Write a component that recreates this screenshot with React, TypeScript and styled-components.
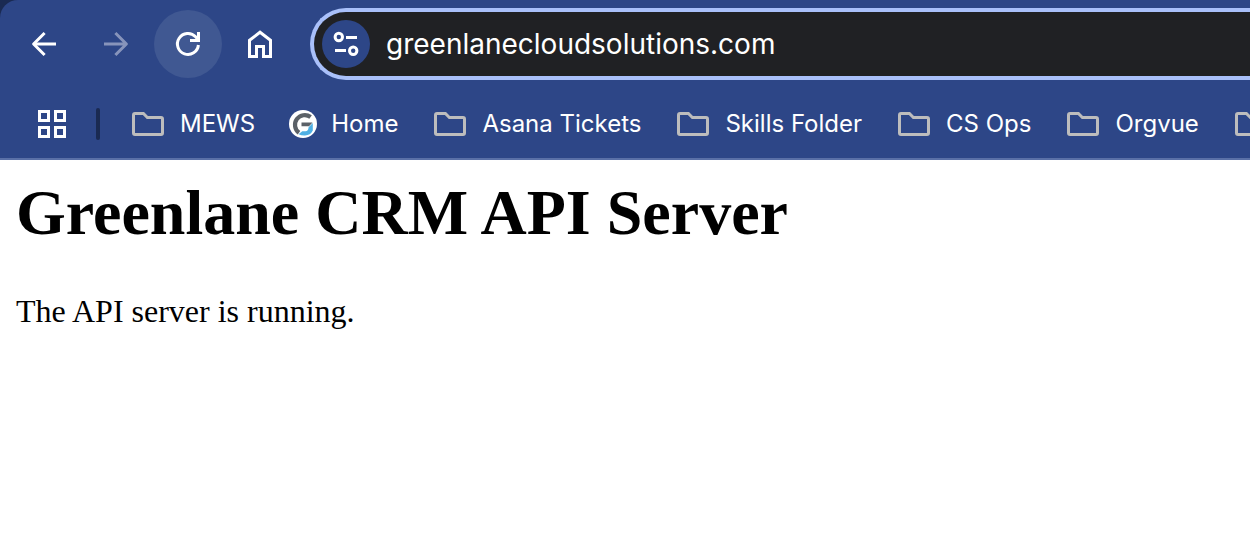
import React, { useState } from "react";
import styled, { createGlobalStyle } from "styled-components";

const GlobalStyle = createGlobalStyle`
  *, *::before, *::after { box-sizing: border-box; }
  body {
    margin: 0;
    background: #ffffff;
    overflow-x: hidden;
  }
`;

const Frame = styled.div`
  background: #1a2a52;
`;

const Chrome = styled.header`
  background: #2d4687;
  border-bottom: 2px solid #5a70a7;
  border-top-left-radius: 18px;
  font-family: Inter, "Liberation Sans", sans-serif;
  color: #ffffff;
  overflow: hidden;
`;

const Toolbar = styled.div`
  display: flex;
  align-items: center;
  gap: 4px;
  padding: 8px 0 8px 10px;
`;

const NavButton = styled.button<{ $active?: boolean }>`
  display: flex;
  align-items: center;
  justify-content: center;
  flex: none;
  width: 68px;
  height: 68px;
  padding: 0;
  border: 0;
  border-radius: 50%;
  background: ${(p) => (p.$active ? "#405892" : "transparent")};
  color: #ffffff;

  &:disabled {
    color: #8794bb;
  }
`;

const AddressBar = styled.form`
  display: flex;
  align-items: center;
  flex: 1;
  gap: 16px;
  height: 72px;
  margin-left: 12px;
  padding-left: 8px;
  border: 4px solid #a9c0fa;
  border-right: 0;
  border-radius: 36px 0 0 36px;
  background: #202124;
`;

const SiteInfo = styled.button`
  display: flex;
  flex: none;
  width: 48px;
  height: 48px;
  padding: 0;
  border: 0;
  border-radius: 50%;
  background: #2d4687;
  color: #ffffff;
`;

const AddressInput = styled.input`
  flex: 1;
  min-width: 0;
  padding: 0;
  border: 0;
  outline: 0;
  background: transparent;
  color: #ffffff;
  font: 400 28px/36px Inter, "Liberation Sans", sans-serif;
`;

const Bookmarks = styled.nav`
  display: flex;
  align-items: center;
  height: 70px;
  padding: 2px 0 0 38px;
`;

const AppsButton = styled.button`
  display: flex;
  flex: none;
  padding: 0;
  border: 0;
  background: transparent;
  color: #ffffff;
`;

const Divider = styled.span`
  flex: none;
  width: 4px;
  height: 32px;
  margin: 0 32px 0 30px;
  border-radius: 2px;
  background: #1a2a52;
`;

const BookmarkList = styled.ul`
  display: flex;
  gap: 36px;
  margin: 0;
  padding: 0;
  list-style: none;
`;

const Bookmark = styled.a`
  display: flex;
  align-items: center;
  gap: 16px;
  color: #ffffff;
  font-size: 24px;
  line-height: 32px;
  text-decoration: none;
  white-space: nowrap;

  svg { flex: none; }
`;

const Favicon = styled.svg`
  margin: 0 -2px;
`;

const Page = styled.main`
  padding: 16px;
  font-family: "Liberation Serif", "Times New Roman", serif;
  color: #000000;
`;

const Title = styled.h1`
  margin: 0 0 43px;
  font-size: 64px;
  line-height: 74px;
  font-weight: 700;
`;

const Status = styled.p`
  margin: 0;
  font-size: 32px;
  line-height: 36px;
`;

const stroke = { fill: "none", stroke: "currentColor", strokeWidth: 3 };

const BackIcon = () => (
  <svg width="32" height="32" viewBox="0 0 32 32" {...stroke}>
    <path d="M28 16H6" />
    <path d="M16.6 5L5.6 16L16.6 27" strokeLinejoin="round" />
  </svg>
);

const ForwardIcon = () => (
  <svg width="32" height="32" viewBox="0 0 32 32" {...stroke}>
    <path d="M4 16H26M15.4 5L26.4 16L15.4 27" strokeLinejoin="round" />
  </svg>
);

const ReloadIcon = () => (
  <svg width="32" height="32" viewBox="0 0 32 32" {...stroke}>
    <path d="M26.4 17A10.5 10.5 0 1 1 23.6 8.8L26.4 12" />
    <path d="M26.5 4V12.5H18" />
  </svg>
);

const HomeIcon = () => (
  <svg width="32" height="32" viewBox="0 0 32 32" {...stroke}>
    <path d="M5.5 28.5V12.3L16 4.2L26.5 12.3V28.5H19.5V18.5H12.5V28.5Z" />
  </svg>
);

const TuneIcon = () => (
  <svg width="48" height="48" viewBox="0 0 48 48" {...stroke}>
    <circle cx="16.8" cy="17" r="3.7" />
    <path d="M24 17.5H35M13 30.5H24" />
    <circle cx="31.2" cy="30.8" r="3.7" />
  </svg>
);

const AppsIcon = () => (
  <svg width="28" height="28" viewBox="0 0 28 28" {...stroke}>
    <path d="M1.5 1.5H10.5V10.5H1.5ZM17.5 1.5H26.5V10.5H17.5ZM1.5 17.5H10.5V26.5H1.5ZM17.5 17.5H26.5V26.5H17.5Z" />
  </svg>
);

const FolderIcon = () => (
  <svg width="32" height="32" viewBox="0 0 32 32" fill="none" stroke="#bdbdbd" strokeWidth="3">
    <path d="M3 5.5H11.4L15.4 9.5H29Q30.5 9.5 30.5 11V25Q30.5 26.5 29 26.5H3Q1.5 26.5 1.5 25V7Q1.5 5.5 3 5.5Z" />
  </svg>
);

const CompanyIcon = () => (
  <Favicon width="28" height="28" viewBox="0 0 28 28" fill="none">
    <circle cx="14" cy="14" r="14" fill="#ffffff" />
    <path d="M21.6 7A9.6 9.6 0 1 0 10 22.8" stroke="#5b6168" strokeWidth="4.2" />
    <path d="M12.5 12.5H23.5L20 16.3H12.5Z" fill="#5b6168" />
    <path d="M23.8 13V20.5Q21.5 25.3 16 25.5Q12.5 25.6 9.5 24.3L13.3 21.2H16.5Q19.3 21 19.6 17.2Z" fill="#4fb0e4" />
  </Favicon>
);

const bookmarks = [
  { label: "MEWS" },
  { label: "Home", company: true },
  { label: "Asana Tickets" },
  { label: "Skills Folder" },
  { label: "CS Ops" },
  { label: "Orgvue" },
];

export default function App() {
  const [address, setAddress] = useState("greenlanecloudsolutions.com");
  return (
    <>
      <GlobalStyle />
      <Frame>
        <Chrome>
          <Toolbar>
            <NavButton aria-label="Back"><BackIcon /></NavButton>
            <NavButton aria-label="Forward" disabled><ForwardIcon /></NavButton>
            <NavButton aria-label="Reload" $active><ReloadIcon /></NavButton>
            <NavButton aria-label="Home page"><HomeIcon /></NavButton>
            <AddressBar onSubmit={(e) => e.preventDefault()}>
              <SiteInfo type="button" aria-label="View site information"><TuneIcon /></SiteInfo>
              <AddressInput
                aria-label="Address"
                spellCheck={false}
                value={address}
                onChange={(e) => setAddress(e.target.value)}
              />
            </AddressBar>
          </Toolbar>
          <Bookmarks aria-label="Bookmarks">
            <AppsButton aria-label="Apps"><AppsIcon /></AppsButton>
            <Divider />
            <BookmarkList>
              {bookmarks.map((b) => (
                <li key={b.label}>
                  <Bookmark href="#">
                    {b.company ? <CompanyIcon /> : <FolderIcon />}
                    {b.label}
                  </Bookmark>
                </li>
              ))}
              <li>
                <Bookmark href="#" aria-label="More bookmarks"><FolderIcon /></Bookmark>
              </li>
            </BookmarkList>
          </Bookmarks>
        </Chrome>
      </Frame>
      <Page>
        <Title>Greenlane CRM API Server</Title>
        <Status>The API server is running.</Status>
      </Page>
    </>
  );
}
